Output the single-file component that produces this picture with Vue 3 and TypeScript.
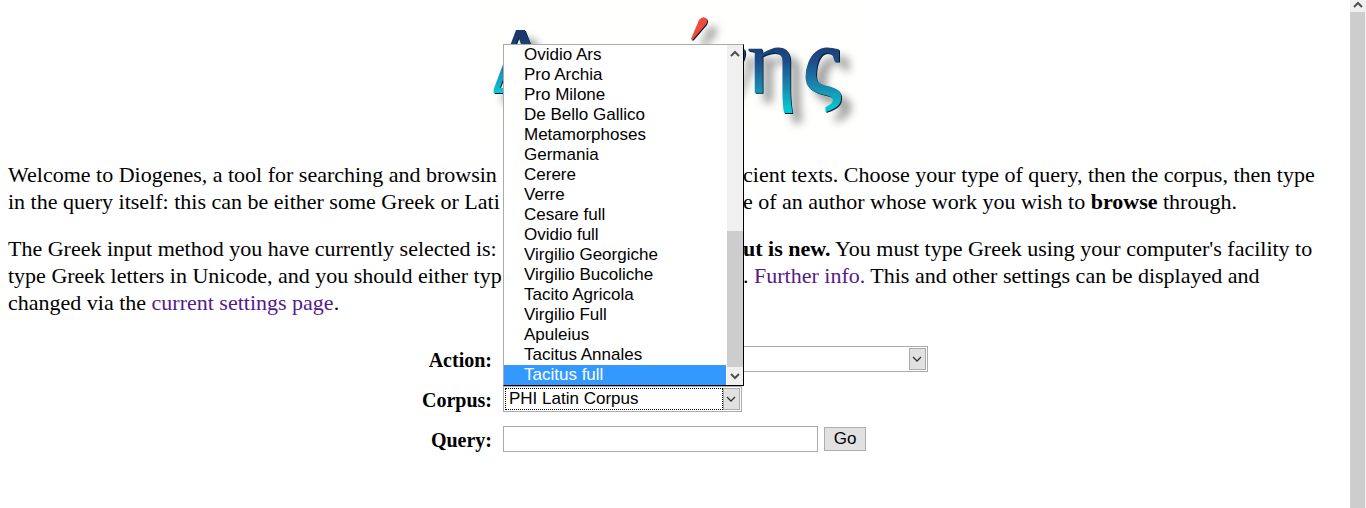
<script setup lang="ts">
import { ref } from 'vue'

const corpora: string[] = [
  'Ovidio Ars',
  'Pro Archia',
  'Pro Milone',
  'De Bello Gallico',
  'Metamorphoses',
  'Germania',
  'Cerere',
  'Verre',
  'Cesare full',
  'Ovidio full',
  'Virgilio Georgiche',
  'Virgilio Bucoliche',
  'Tacito Agricola',
  'Virgilio Full',
  'Apuleius',
  'Tacitus Annales',
  'Tacitus full',
]
const highlighted = ref('Tacitus full')
const query = ref('')
</script>

<template>
  <div class="window">
    <main class="page">
      <h1 class="banner">
        <svg class="logo" viewBox="0 0 380 136" role="img" aria-label="Diogenes">
          <defs>
            <linearGradient id="ink" gradientUnits="userSpaceOnUse" x1="0" y1="42" x2="0" y2="110">
              <stop offset="0" stop-color="#1d3c70" />
              <stop offset="0.25" stop-color="#1c4f8c" />
              <stop offset="0.6" stop-color="#1b86ac" />
              <stop offset="0.95" stop-color="#05c8d2" />
            </linearGradient>
            <linearGradient id="delta" gradientUnits="userSpaceOnUse" x1="0" y1="22" x2="0" y2="92">
              <stop offset="0.2" stop-color="#1b396b" />
              <stop offset="0.6" stop-color="#1b80b0" />
              <stop offset="1" stop-color="#08d0dc" />
            </linearGradient>
            <filter id="shade" x="-10%" y="-10%" width="130%" height="140%">
              <feDropShadow dx="1" dy="1" stdDeviation="0" flood-color="#061a30" />
              <feDropShadow dx="9" dy="9" stdDeviation="4" flood-color="#000" flood-opacity="0.4" />
            </filter>
          </defs>
          <rect width="380" height="136" fill="#fffffd" />
          <g class="greek" filter="url(#shade)">
            <text x="5" y="90" fill="url(#delta)">Δ</text>
            <text x="219" y="90" fill="url(#ink)">ν</text>
            <text x="262" y="90" fill="url(#ink)">η</text>
            <text class="sigma" x="318" y="91" fill="url(#ink)" stroke="url(#ink)">ς</text>
            <path d="M206 36 L214 17 Q217 13 221 15 Q223 17 221 21 L209 35 Q207 38 206 36Z" fill="#ee4b3e" />
          </g>
        </svg>
      </h1>

      <p class="intro">
        <span class="line"><span>Welcome to Diogenes, a tool for searching and browsin</span><span>cient texts. Choose your type of query, then the corpus, then type</span></span>
        <span class="line"><span>in the query itself: this can be either some Greek or Lati</span><span>e of an author whose work you wish to <strong>browse</strong> through.</span></span>
      </p>
      <p class="intro">
        <span class="line"><span>The Greek input method you have currently selected is:</span><span><strong>ut is new.</strong> You must type Greek using your computer's facility to</span></span>
        <span class="line"><span>type Greek letters in Unicode, and you should either typ</span><span>. <a href="#info">Further info.</a> This and other settings can be displayed and</span></span>
        <span class="line"><span>changed via the <a href="#settings">current settings page</a>.</span></span>
      </p>

      <form class="search" @submit.prevent>
        <label for="action">Action:</label>
        <div class="field">
          <span class="picker wide">
            <select id="action"><option></option></select>
            <svg class="drop" viewBox="0 0 15 20" aria-hidden="true"><path d="M3 8l4 4 4-4" /></svg>
          </span>
        </div>
        <label for="corpus">Corpus:</label>
        <div class="field">
          <span class="picker focused">
            <select id="corpus"><option>PHI Latin Corpus</option></select>
            <svg class="drop" viewBox="0 0 15 20" aria-hidden="true"><path d="M3 8l4 4 4-4" /></svg>
            <div class="popup">
              <ul role="listbox" aria-label="Corpus">
                <li
                  v-for="name in corpora"
                  :key="name"
                  role="option"
                  :aria-selected="name === highlighted"
                  :class="{ active: name === highlighted }"
                  @mouseenter="highlighted = name"
                >{{ name }}</li>
              </ul>
              <div class="bar">
                <svg viewBox="0 0 16 18" aria-hidden="true"><path d="M4 11l4-4 4 4" /></svg>
                <div class="thumb"></div>
                <svg viewBox="0 0 16 18" aria-hidden="true"><path d="M4 7l4 4 4-4" /></svg>
              </div>
            </div>
          </span>
        </div>
        <label for="query">Query:</label>
        <div class="field">
          <input id="query" v-model="query" type="text" />
          <button type="submit">Go</button>
        </div>
      </form>
    </main>

    <div class="scroll" aria-hidden="true">
      <svg viewBox="0 0 16 12"><path d="M4 7l4-4 4 4" /></svg>
      <div class="handle"></div>
    </div>
  </div>
</template>

<style>
body {
  margin: 0;
  background: #fff;
}
</style>

<style scoped>
.window {
  display: flex;
  min-height: 100vh;
  overflow: hidden;
  color: #000;
  font-family: "Palatino Linotype", Palatino, "Liberation Serif", serif;
  font-size: 22px;
  line-height: 27px;
}
.page {
  flex: 1;
  min-width: 0;
  padding: 3px 8px 0;
}
.banner {
  display: flex;
  justify-content: center;
  margin: 0 0 22px;
}
.logo {
  width: 380px;
  height: 136px;
}
.greek {
  font-family: "Liberation Serif", serif;
  font-size: 96px;
  font-weight: 400;
}
.sigma {
  stroke-width: 2;
}
.intro {
  margin: 0 0 20px;
}
.line {
  display: grid;
  grid-template-columns: calc(50% - 172px) 1fr;
  column-gap: 240px;
  white-space: nowrap;
}
a {
  color: #551a8b;
  text-decoration: none;
}
.search {
  display: grid;
  grid-template-columns: 70px 425px;
  grid-auto-rows: 26px;
  justify-content: center;
  align-items: center;
  gap: 14px 11px;
  margin-top: 30px;
}
label {
  padding-top: 2px;
  font-size: 20px;
  font-weight: 700;
  text-align: right;
}
.field {
  display: flex;
  align-items: center;
  gap: 6px;
}
.picker {
  position: relative;
  display: flex;
  width: 239px;
  height: 26px;
  box-sizing: border-box;
  border: 1px solid #ababab;
  padding: 1px;
}
.picker.wide {
  width: 425px;
}
select {
  flex: 1;
  min-width: 0;
  margin: 0;
  padding: 0 4px;
  border: 0;
  border-radius: 0;
  outline: 0;
  background: #fff;
  appearance: none;
}
.focused select {
  padding: 0 3px;
  border: 1px dotted #000;
}
select,
input,
button,
.popup {
  color: #000;
  font-family: "Liberation Sans", Arial, sans-serif;
  font-size: 17px;
  line-height: 20px;
}
.drop {
  width: 17px;
  box-sizing: border-box;
  border: 1px solid #ababab;
  background: #e1e1e1;
}
.drop path {
  fill: none;
  stroke: #333;
  stroke-width: 1.3;
}
.popup {
  position: absolute;
  z-index: 2;
  left: -1px;
  bottom: 100%;
  display: flex;
  width: 241px;
  box-sizing: border-box;
  margin-bottom: 1px;
  border: 1px solid #ababab;
  border-right-color: #000;
  border-bottom-color: #000;
  background: #fff;
}
ul {
  flex: 1;
  margin: 0;
  padding: 0;
  list-style: none;
}
li {
  padding-left: 20px;
}
li.active {
  background: #3399ff;
  color: #fff;
}
.bar {
  display: flex;
  flex-direction: column;
  width: 16px;
  margin-left: 1px;
  background: #f0f0f0;
}
.bar svg {
  height: 18px;
}
.bar path,
.scroll path {
  fill: none;
  stroke: #505050;
  stroke-width: 2;
}
.thumb {
  height: 136px;
  margin-top: auto;
  background: #cdcdcd;
}
input {
  width: 315px;
  height: 26px;
  box-sizing: border-box;
  border: 1px solid #ababab;
  padding: 0 4px;
}
button {
  width: 42px;
  height: 24px;
  padding: 0;
  border: 1px solid #adadad;
  background: #e1e1e1;
}
.scroll {
  display: flex;
  flex-direction: column;
  width: 16px;
  background: #f0f0f0;
}
.scroll svg {
  height: 12px;
}
.handle {
  flex: 1;
  margin-right: 1px;
  background: #cdcdcd;
}
</style>
